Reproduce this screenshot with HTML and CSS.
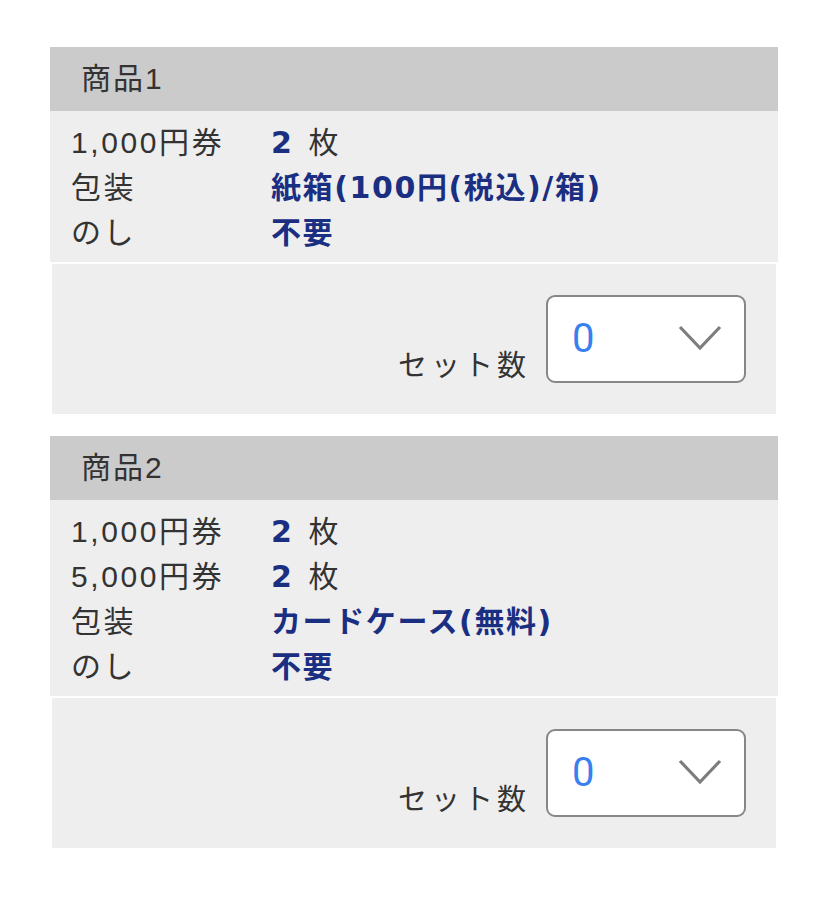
FILE: index.html
```html
<!DOCTYPE html>
<html lang="ja">
<head>
<meta charset="utf-8">
<title>商品</title>
<link rel="stylesheet" href="styles.css">
</head>
<body>
<div class="list">
  <section class="card">
    <h2 class="card-head">商品1</h2>
    <dl class="specs">
      <dt>1,000円券</dt><dd><b class="count">2</b> 枚</dd>
      <dt>包装</dt><dd><b>紙箱(100円(税込)/箱)</b></dd>
      <dt>のし</dt><dd><b>不要</b></dd>
    </dl>
    <div class="qty">
      <span class="qty-label">セット数</span>
      <div class="select">
        <span class="select-value">0</span>
        <svg class="chevron" viewBox="0 0 44 26" width="44" height="26"><path d="M2 2 L22 23 L42 2" fill="none" stroke="#7d7d7d" stroke-width="3.2"/></svg>
      </div>
    </div>
  </section>
  <section class="card">
    <h2 class="card-head">商品2</h2>
    <dl class="specs">
      <dt>1,000円券</dt><dd><b class="count">2</b> 枚</dd>
      <dt>5,000円券</dt><dd><b class="count">2</b> 枚</dd>
      <dt>包装</dt><dd><b>カードケース(無料)</b></dd>
      <dt>のし</dt><dd><b>不要</b></dd>
    </dl>
    <div class="qty">
      <span class="qty-label">セット数</span>
      <div class="select">
        <span class="select-value">0</span>
        <svg class="chevron" viewBox="0 0 44 26" width="44" height="26"><path d="M2 2 L22 23 L42 2" fill="none" stroke="#7d7d7d" stroke-width="3.2"/></svg>
      </div>
    </div>
  </section>
</div>
</body>
</html>
```

FILE: styles.css
```css
html, body {
  margin: 0;
  padding: 0;
  background: #ffffff;
}
body {
  font-family: "Liberation Sans", "Noto Sans CJK JP", sans-serif;
  color: #333333;
}
.list {
  width: 728px;
  margin-left: 50px;
  padding-top: 47px;
  display: flex;
  flex-direction: column;
  gap: 22px;
}
.card {
  display: flex;
  flex-direction: column;
}
.card-head {
  margin: 0;
  height: 64px;
  box-sizing: border-box;
  padding-left: 31px;
  background: #cbcbcb;
  font-size: 30px;
  font-weight: normal;
  line-height: 64px;
  letter-spacing: 2px;
  color: #333333;
}
.specs {
  margin: 0;
  padding: 9px 0 7px 21px;
  background: #eeeeee;
  display: grid;
  grid-template-columns: 200px 1fr;
  font-size: 30px;
  line-height: 45px;
  letter-spacing: 2.6px;
}
.specs dt, .specs dd {
  margin: 0;
}
.specs b {
  font-family: "DejaVu Sans", "Noto Sans CJK JP", sans-serif;
  color: #1b2f82;
  font-weight: bold;
  letter-spacing: 1.6px;
}
.specs b.count {
  margin-right: 4px;
}
.qty {
  margin: 2px 2px 0;
  height: 150px;
  box-sizing: border-box;
  padding: 31px 30px;
  background: #eeeeee;
  display: flex;
  justify-content: flex-end;
  align-items: flex-end;
  gap: 16px;
}
.qty-label {
  font-size: 29px;
  line-height: 40px;
  letter-spacing: 4px;
  margin-bottom: -3px;
  color: #333333;
}
.select {
  width: 200px;
  height: 88px;
  box-sizing: border-box;
  border: 2px solid #878787;
  border-radius: 9px;
  background: #ffffff;
  display: flex;
  align-items: center;
  justify-content: space-between;
  padding: 0 22px 0 24px;
}
.select-value {
  font-family: Roboto, "Liberation Sans", sans-serif;
  font-size: 40px;
  color: #3a7ff0;
  line-height: 1;
}
.chevron {
  display: block;
  margin-top: -2px;
}
```
